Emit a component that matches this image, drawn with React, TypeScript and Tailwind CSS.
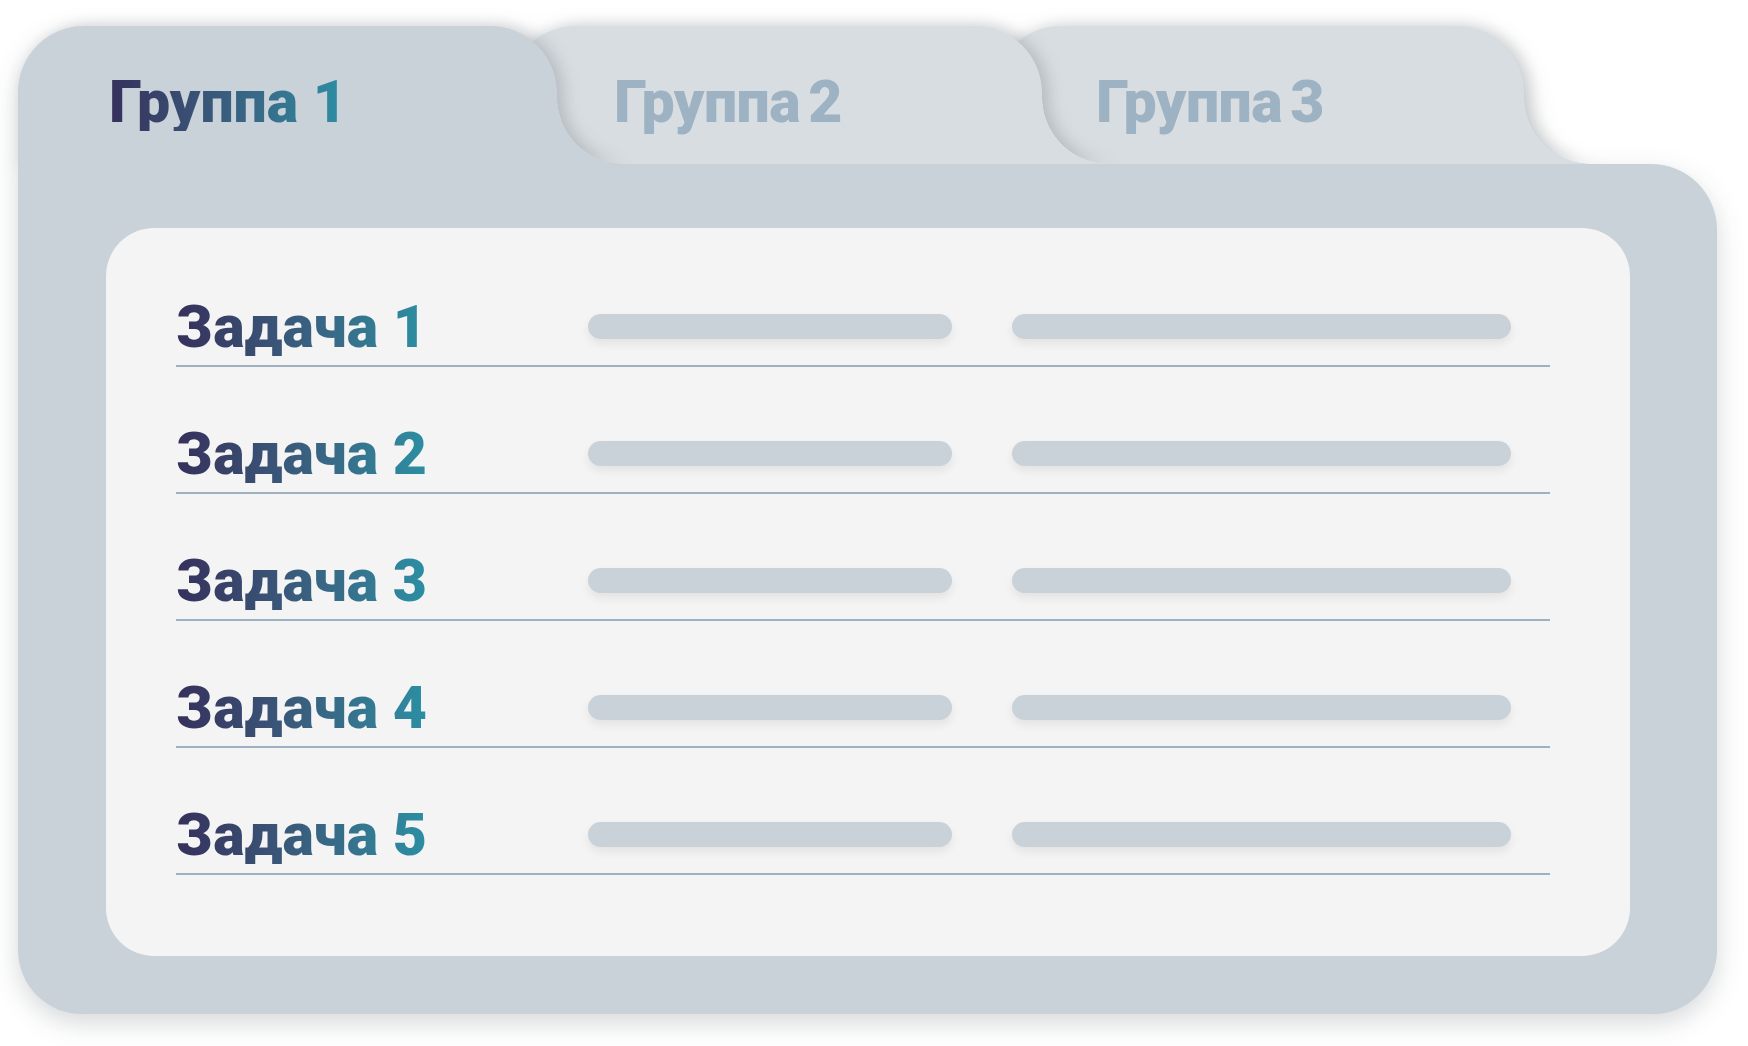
import React from 'react';

const tasks = ['Задача 1', 'Задача 2', 'Задача 3', 'Задача 4', 'Задача 5'];

function TaskRow({ title }: { title: string }) {
    return (
        <div className="flex h-[127px] items-end border-b-2 border-[#9db1c2]">
            <div className="w-[412px] pb-[9px]">
                <span className="inline-block bg-linear-to-r from-[#35305b] to-[#2a8fa3] bg-clip-text text-[59px] font-black leading-none text-transparent">
                    {title}
                </span>
            </div>
            <div className="mb-[26px] flex items-center gap-[60px]">
                <div className="h-[25px] w-[364px] rounded-full bg-[#c9d1d9] shadow-[0_5px_10px_rgba(0,0,0,0.07)]" />
                <div className="h-[25px] w-[499px] rounded-full bg-[#c9d1d9] shadow-[0_5px_10px_rgba(0,0,0,0.07)]" />
            </div>
        </div>
    );
}

export default function App() {
    return (
        <div className="min-h-screen bg-white pl-[18px] pt-[26px] font-[Roboto,'Liberation_Sans',sans-serif]">
            <div className="w-[1699px] drop-shadow-[0_9px_13px_rgba(30,40,50,0.18)]">
                {/* tabs */}
                <div className="flex">
                    <div className="relative z-30 flex items-end drop-shadow-[6px_0_8px_rgba(40,50,60,0.2)]">
                        <div className="h-[138px] w-[539px] rounded-tl-[66px] rounded-tr-[67px] bg-[#c9d1d9] pl-[91px] pt-[46px]">
                            <span className="inline-block bg-linear-to-r from-[#35305b] to-[#2a8fa3] bg-clip-text text-[59px] font-black leading-none text-transparent">
                                Группа 1
                            </span>
                        </div>
                        <div className="h-[67px] w-[67px] bg-[radial-gradient(circle_at_100%_0,transparent_66.5px,#c9d1d9_67px)]" />
                    </div>
                    <div className="relative z-20 -ml-[115px] flex items-end drop-shadow-[6px_0_8px_rgba(40,50,60,0.2)]">
                        <div className="h-[138px] w-[533px] rounded-t-[67px] bg-[#d8dde1] pl-[105px] pt-[46px]">
                            <span className="text-[59px] font-black leading-none tracking-[-0.5px] text-[#9db2c2] [word-spacing:-6px]">Группа 2</span>
                        </div>
                        <div className="h-[67px] w-[67px] bg-[radial-gradient(circle_at_100%_0,transparent_66.5px,#d8dde1_67px)]" />
                    </div>
                    <div className="relative z-10 -ml-[115px] flex items-end drop-shadow-[6px_0_8px_rgba(40,50,60,0.18)]">
                        <div className="h-[138px] w-[530px] rounded-t-[67px] bg-[#d8dde1] pl-[102px] pt-[46px]">
                            <span className="text-[59px] font-black leading-none tracking-[-0.5px] text-[#9db2c2] [word-spacing:-6px]">Группа 3</span>
                        </div>
                        <div className="h-[67px] w-[67px] bg-[radial-gradient(circle_at_100%_0,transparent_66.5px,#d8dde1_67px)]" />
                    </div>
                </div>

                {/* body */}
                <div className="relative z-40 h-[850px] rounded-tr-[66px] rounded-b-[64px] bg-[#c9d1d9] pl-[88px] pt-[64px]">
                    <div className="h-[728px] w-[1524px] rounded-[48px] bg-[#f4f4f4] pl-[70px] pr-[80px] pt-[12px]">
                        {tasks.map(t => (
                            <TaskRow key={t} title={t} />
                        ))}
                    </div>
                </div>
            </div>
        </div>
    );
}
